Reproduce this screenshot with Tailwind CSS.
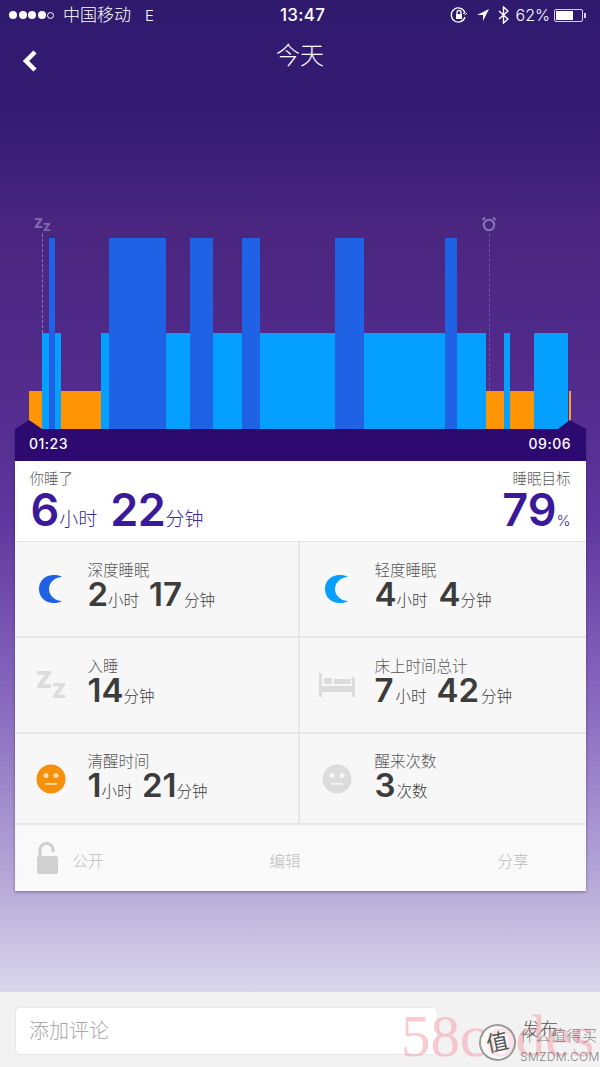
<!DOCTYPE html>
<html lang="zh">
  <head>
    <meta charset="UTF-8" />
    <meta name="viewport" content="width=device-width, initial-scale=1.0" />
    <title>今天</title>
    <script src="https://cdn.jsdelivr.net/npm/@tailwindcss/browser@4"></script>
  </head>
  <body class="font-['Inter','Noto_Sans_CJK_SC',sans-serif]">
    <div class="relative w-[600px] h-[1067px] overflow-hidden flex flex-col bg-[linear-gradient(180deg,#2f1a6e_0px,#341b72_110px,#4a2680_230px,#542c8e_400px,#5f379e_520px,#8a6cc0_710px,#b5a8d8_880px,#d9d6ea_992px)]">

      <!-- status bar -->
      <div class="h-[30px] shrink-0 flex items-center px-[9px] text-white text-[15px] leading-none">
        <div class="flex items-center gap-[1.5px] w-[50px]">
          <span class="w-[8px] h-[8px] rounded-full bg-white"></span>
          <span class="w-[8px] h-[8px] rounded-full bg-white"></span>
          <span class="w-[8px] h-[8px] rounded-full bg-white"></span>
          <span class="w-[8px] h-[8px] rounded-full bg-white"></span>
          <span class="w-[7px] h-[7px] rounded-full border border-white"></span>
        </div>
        <span class="ml-[4px] w-[82px] font-light text-[17px]">中国移动</span>
        <span class="font-light text-[15px] w-[135px]">E</span>
        <span class="w-[100px] font-medium text-[17px] tracking-[0.3px]">13:47</span>
        <div class="ml-auto flex items-center">
          <svg class="w-[18px] h-[18px] mr-[8px]" viewBox="0 0 18 18" fill="none" stroke="white" stroke-width="1.3"><path d="M15 11a7 7 0 1 1 0-4"/><path d="M13 7l2.5 1.5L17 7" stroke-width="1"/><rect x="6" y="8" width="6" height="5" fill="white" stroke="none"/><path d="M7 8V6.5a2 2 0 0 1 4 0V8"/></svg>
          <svg class="w-[14px] h-[14px] mr-[8px]" viewBox="0 0 14 14" fill="white"><path d="M13 1L1 7h6v6z"/></svg>
          <svg class="w-[11px] h-[18px] mr-[7px]" viewBox="0 0 11 18" fill="none" stroke="white" stroke-width="1.4"><path d="M1 5l9 8-4.5 4V1L10 5l-9 8"/></svg>
          <span class="font-light text-[16px] mr-[4px]">62%</span>
          <div class="relative w-[29px] h-[13px] rounded-[2px] border border-white/80 p-[1px] mr-[1px]">
            <div class="w-[17px] h-full bg-white"></div>
          </div>
          <span class="w-[2px] h-[5px] bg-white/80 mr-[5px]"></span>
        </div>
      </div>

      <!-- header -->
      <div class="relative h-[52px] shrink-0 flex items-center justify-center text-white text-[24px] font-light">
        <svg class="absolute left-[21px] top-[19px] w-[18px] h-[24px]" viewBox="0 0 18 24" fill="none" stroke="white" stroke-width="4.5"><path d="M14 3L5 12l9 9"/></svg>
        <span>今天</span>
      </div>

      <!-- chart -->
      <div class="relative h-[347px] shrink-0 flex items-end pl-[29px]">
        <div class="flex items-end h-[191px]">
          <div class="w-[13px] h-[38px] bg-[#ff9505]"></div>
          <div class="w-[6.5px] h-[96px] bg-[#05a0ff]"></div>
          <div class="w-[6px] h-[191px] bg-[#1f62e6]"></div>
          <div class="w-[6.5px] h-[96px] bg-[#05a0ff]"></div>
          <div class="w-[40px] h-[38px] bg-[#ff9505]"></div>
          <div class="w-[7.5px] h-[96px] bg-[#05a0ff]"></div>
          <div class="w-[57.5px] h-[191px] bg-[#1f62e6]"></div>
          <div class="w-[23.5px] h-[96px] bg-[#05a0ff]"></div>
          <div class="w-[23.5px] h-[191px] bg-[#1f62e6]"></div>
          <div class="w-[29px] h-[96px] bg-[#05a0ff]"></div>
          <div class="w-[18px] h-[191px] bg-[#1f62e6]"></div>
          <div class="w-[74.5px] h-[96px] bg-[#05a0ff]"></div>
          <div class="w-[29.5px] h-[191px] bg-[#1f62e6]"></div>
          <div class="w-[80.5px] h-[96px] bg-[#05a0ff]"></div>
          <div class="w-[12.5px] h-[191px] bg-[#1f62e6]"></div>
          <div class="w-[29px] h-[96px] bg-[#05a0ff]"></div>
          <div class="w-[17.5px] h-[38px] bg-[#ff9505]"></div>
          <div class="w-[6.5px] h-[96px] bg-[#05a0ff]"></div>
          <div class="w-[23.5px] h-[38px] bg-[#ff9505]"></div>
          <div class="w-[34.5px] h-[96px] bg-[#05a0ff]"></div>
          <div class="w-[1px] h-[38px]"></div>
          <div class="w-[2px] h-[38px] bg-[#f5a033]"></div>
        </div>

        <!-- sleep and wake markers -->
        <div class="absolute left-[34px] top-[135px] flex font-black text-[#7d67ad] leading-[12px]">
          <span class="text-[13px]">Z</span><span class="text-[11px] mt-[4px]">Z</span>
        </div>
        <div class="absolute left-[42px] top-[152px] h-[99px] border-l border-dashed border-[#8b76b8]"></div>
        <svg class="absolute left-[481px] top-[134px] w-[16px] h-[16px]" viewBox="0 0 16 16" fill="none" stroke="#8b76b8" stroke-width="2"><circle cx="8" cy="9" r="5.2"/><path d="M1.5 4L4 1.5M14.5 4L12 1.5"/></svg>
        <div class="absolute left-[489px] top-[152px] h-[157px] border-l border-dashed border-[#6e529f]"></div>

        <!-- end handles -->
        <svg class="absolute left-[15px] bottom-0 w-[27px] h-[9px]" viewBox="0 0 27 9" fill="#2c0a70"><path d="M0 9L14 0l13 9z"/></svg>
        <svg class="absolute left-[558px] bottom-0 w-[28px] h-[9px]" viewBox="0 0 28 9" fill="#2c0a70"><path d="M0 9L12 0l16 9z"/></svg>
      </div>

      <!-- summary card -->
      <div class="mx-[14.5px] w-[571px] shrink-0 shadow-[0_1px_3px_rgba(40,20,90,0.45)]">
        <div class="h-[32px] bg-[#2c0a70] flex items-center justify-between px-[14.5px] pb-[3px] text-white text-[14px] font-medium tracking-[0.5px]">
          <span>01:23</span>
          <span>09:06</span>
        </div>

        <div class="h-[81px] bg-white flex justify-between px-[15px] pt-[9px] border-b border-[#e2e2e2]">
          <div>
            <div class="text-[14.5px] leading-[17px] font-light text-[#5a5a5a]">你睡了</div>
            <div class="flex items-baseline text-[#3a1a9a] leading-[44px] mt-[1px]">
              <span class="text-[45px] font-semibold ml-[1px]">6</span>
              <span class="text-[19px] font-light text-[#3d2a8a]">小时</span>
              <span class="text-[45px] font-semibold ml-[13px] tracking-[-0.5px]">22</span>
              <span class="text-[19px] font-light text-[#3d2a8a]">分钟</span>
            </div>
          </div>
          <div class="flex flex-col items-end">
            <div class="text-[14.5px] leading-[17px] font-light text-[#5a5a5a]">睡眠目标</div>
            <div class="flex items-baseline text-[#3a1a9a] leading-[44px] mt-[1px]">
              <span class="text-[45px] font-semibold">79</span>
              <span class="text-[15px] font-light text-[#3d2a8a]">%</span>
            </div>
          </div>
        </div>

        <div class="grid grid-cols-[285px_286px] bg-[#f7f7f7] text-[#3c3c3c]">
          <!-- deep sleep -->
          <div class="h-[96px] flex items-center border-r-2 border-b-2 border-[#e6e6e6]">
            <div class="w-[73px] flex justify-center">
              <svg class="w-[24px] h-[28px]" viewBox="0 0 24 28" fill="#1f62e6"><path d="M23 2C17 2 10 6.500 10 14s7 12 13 12C21 27.500 18 28 15 28 6 28 0 22 0 14S6 0 15 0c3 0 6 .5 8 2z"/></svg>
            </div>
            <div class="pt-[1px]">
              <div class="text-[15.5px] leading-[17px] font-light text-[#585858]">深度睡眠</div>
              <div class="flex items-baseline leading-[33px] -mt-[1px]"><span class="text-[33px] font-semibold">2</span><span class="text-[15.5px] font-light">小时</span><span class="text-[33px] font-semibold ml-[10px]">17</span><span class="text-[15.5px] font-light ml-[2px]">分钟</span></div>
            </div>
          </div>
          <!-- light sleep -->
          <div class="h-[96px] flex items-center border-b-2 border-[#e6e6e6]">
            <div class="w-[75px] flex justify-center">
              <svg class="w-[24px] h-[28px]" viewBox="0 0 24 28" fill="#05a0ff"><path d="M23 2C17 2 10 6.500 10 14s7 12 13 12C21 27.500 18 28 15 28 6 28 0 22 0 14S6 0 15 0c3 0 6 .5 8 2z"/></svg>
            </div>
            <div class="pt-[1px]">
              <div class="text-[15.5px] leading-[17px] font-light text-[#585858]">轻度睡眠</div>
              <div class="flex items-baseline leading-[33px] -mt-[1px]"><span class="text-[33px] font-semibold">4</span><span class="text-[15.5px] font-light">小时</span><span class="text-[33px] font-semibold ml-[11px]">4</span><span class="text-[15.5px] font-light">分钟</span></div>
            </div>
          </div>
          <!-- fell asleep -->
          <div class="h-[96px] flex items-center border-r-2 border-b-2 border-[#e6e6e6]">
            <div class="w-[73px] flex justify-center font-black text-[#dcdcdc] leading-[22px]">
              <span class="text-[23px]">Z</span><span class="text-[20px] mt-[11px]">Z</span>
            </div>
            <div class="pt-[1px]">
              <div class="text-[15.5px] leading-[17px] font-light text-[#585858]">入睡</div>
              <div class="flex items-baseline leading-[33px] -mt-[1px]"><span class="text-[33px] font-semibold">14</span><span class="text-[15.5px] font-light">分钟</span></div>
            </div>
          </div>
          <!-- time in bed -->
          <div class="h-[96px] flex items-center border-b-2 border-[#e6e6e6]">
            <div class="w-[75px] flex justify-center">
              <svg class="w-[36px] h-[24px]" viewBox="0 0 36 24" fill="#dcdcdc"><rect x="0" y="0" width="3" height="24"/><rect x="33" y="4" width="3" height="20"/><rect x="3" y="13" width="30" height="6"/><rect x="5" y="5" width="8" height="6"/><rect x="15" y="6" width="17" height="5"/></svg>
            </div>
            <div class="pt-[1px]">
              <div class="text-[15.5px] leading-[17px] font-light text-[#585858]">床上时间总计</div>
              <div class="flex items-baseline leading-[33px] -mt-[1px]"><span class="text-[33px] font-semibold">7</span><span class="text-[15.5px] font-light ml-[2px]">小时</span><span class="text-[33px] font-semibold ml-[10px]">42</span><span class="text-[15.5px] font-light ml-[2px]">分钟</span></div>
            </div>
          </div>
          <!-- awake time -->
          <div class="h-[91px] flex items-center border-r-2 border-b-2 border-[#e6e6e6]">
            <div class="w-[73px] flex justify-center">
              <svg class="w-[30px] h-[30px]" viewBox="0 0 30 30"><circle cx="15" cy="15" r="14.500" fill="#f4900c"/><circle cx="10" cy="11.500" r="2.500" fill="#fbd9a8"/><circle cx="20" cy="11.500" r="2.500" fill="#fbd9a8"/><rect x="9" y="19" width="12" height="1.800" fill="#fbd9a8"/></svg>
            </div>
            <div class="pt-[3px]">
              <div class="text-[15.5px] leading-[17px] font-light text-[#585858]">清醒时间</div>
              <div class="flex items-baseline leading-[33px] -mt-[1px]"><span class="text-[33px] font-semibold">1</span><span class="text-[15.5px] font-light">小时</span><span class="text-[33px] font-semibold ml-[9.5px]">21</span><span class="text-[15.5px] font-light">分钟</span></div>
            </div>
          </div>
          <!-- times awake -->
          <div class="h-[91px] flex items-center border-b-2 border-[#e6e6e6]">
            <div class="w-[75px] flex justify-center">
              <svg class="w-[30px] h-[30px]" viewBox="0 0 30 30"><circle cx="15" cy="15" r="14.500" fill="#dcdcdc"/><circle cx="10" cy="11.500" r="2.500" fill="#f4f4f4"/><circle cx="20" cy="11.500" r="2.500" fill="#f4f4f4"/><rect x="9" y="19" width="12" height="1.800" fill="#f4f4f4"/></svg>
            </div>
            <div class="pt-[3px]">
              <div class="text-[15.5px] leading-[17px] font-light text-[#585858]">醒来次数</div>
              <div class="flex items-baseline leading-[33px] -mt-[1px]"><span class="text-[33px] font-semibold">3</span><span class="text-[15.5px] font-light ml-[1px]">次数</span></div>
            </div>
          </div>
        </div>

        <!-- actions -->
        <div class="h-[66px] bg-[#f9f9f9] flex items-center text-[15.5px] font-light text-[#bdbdbd]">
          <svg class="w-[23px] h-[34px] ml-[21px]" viewBox="0 0 23 34" fill="none"><path d="M4 16V9a6.500 6.500 0 0 1 13 0v2" stroke="#cfcfcf" stroke-width="3"/><rect x="1" y="15" width="21" height="18" rx="2" fill="#d0d0d0"/></svg>
          <span class="ml-[14px] mt-[8px]">公开</span>
          <span class="ml-[166px] mt-[8px]">编辑</span>
          <span class="ml-[197px] mt-[8px]">分享</span>
        </div>
      </div>

      <!-- comment bar -->
      <div class="mt-auto h-[75px] shrink-0 bg-[#f2f2f2] flex items-start pl-[15px] pt-[15px]">
        <div class="w-[423px] h-[48px] rounded-[5px] bg-white border border-[#e8e8e8] flex items-center pl-[13px] text-[20px] font-light text-[#a8a8a8]">添加评论</div>
        <span class="ml-[84px] mt-[9px] text-[18px] font-light text-[#555]">发布</span>
      </div>

      <!-- watermarks -->
      <span class="absolute left-[401px] top-[1006px] font-['Liberation_Serif',serif] text-[59px] leading-[60px] text-[#f3a9b4]/60">58codes</span>
      <div class="absolute left-[479px] top-[1024px] w-[37px] h-[37px] rounded-full border-2 border-[#999] bg-white/50 flex items-center justify-center text-[22px] text-[#555] -rotate-12">值</div>
      <div class="absolute left-[520px] top-[1028px] text-[#666]/80 font-light leading-none">
        <div class="text-[15px] tracking-[0.5px] whitespace-nowrap">什么值得买</div>
        <div class="text-[12px] mt-[8px] tracking-[0.3px]">SMZDM.COM</div>
      </div>
    </div>
  </body>
</html>
